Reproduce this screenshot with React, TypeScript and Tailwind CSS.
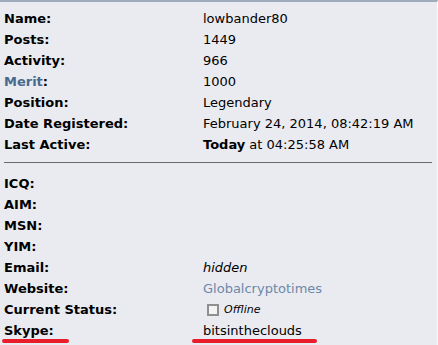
import React from "react";

type Row = { label: React.ReactNode; value?: React.ReactNode };

const top: Row[] = [
  { label: "Name:", value: "lowbander80" },
  { label: "Posts:", value: "1449" },
  { label: "Activity:", value: "966" },
  { label: <><span className="text-[#476a8f]">Merit</span>:</>, value: "1000" },
  { label: "Position:", value: "Legendary" },
  { label: "Date Registered:", value: "February 24, 2014, 08:42:19 AM" },
  { label: "Last Active:", value: <span><b>Today</b>{" at 04:25:58 AM"}</span> },
];

const bottom: Row[] = [
  { label: "ICQ:" },
  { label: "AIM:" },
  { label: "MSN:" },
  { label: "YIM:" },
  { label: "Email:", value: <i>hidden</i> },
  { label: "Website:", value: <span className="text-[#6d88a8]">Globalcryptotimes</span> },
  {
    label: "Current Status:",
    value: (
      <span className="flex items-center">
        <span className="ml-[4px] mr-[5px] inline-block h-[12px] w-[12px] border-2 border-[#8f8f8f] bg-[#f4f4f4]" />
        <i className="text-[11px]">Offline</i>
      </span>
    ),
  },
  { label: "Skype:", value: "bitsintheclouds" },
];

function Rows({ rows }: { rows: Row[] }) {
  return (
    <div className="flex flex-col">
      {rows.map((r, i) => (
        <div key={i} className="flex h-[21px] items-center leading-[21px]">
          <div className="w-[203px] shrink-0 pl-[4px] font-bold">{r.label}</div>
          <div className="whitespace-pre">{r.value}</div>
        </div>
      ))}
    </div>
  );
}

export default function App() {
  return (
    <div className="relative h-[345px] w-[438px] overflow-hidden border-t-2 border-r border-t-[#9eabbc] border-r-[#f7f8fa] bg-[#eaebf1] font-['DejaVu_Sans',Verdana,sans-serif] text-[13px] text-black">
      <div className="pt-[6px]">
        <Rows rows={top} />
      </div>
      <div className="mt-[7px] mb-[10px] ml-[4px] mr-[5px] h-px bg-[#6a6a6a]" />
      <Rows rows={bottom} />
      <div className="absolute left-[2px] top-[337px] h-[4px] w-[67px] rounded-full bg-[#e91c2a]" />
      <div className="absolute left-[192px] top-[337px] h-[4px] w-[125px] rounded-full bg-[#e91c2a]" />
    </div>
  );
}
